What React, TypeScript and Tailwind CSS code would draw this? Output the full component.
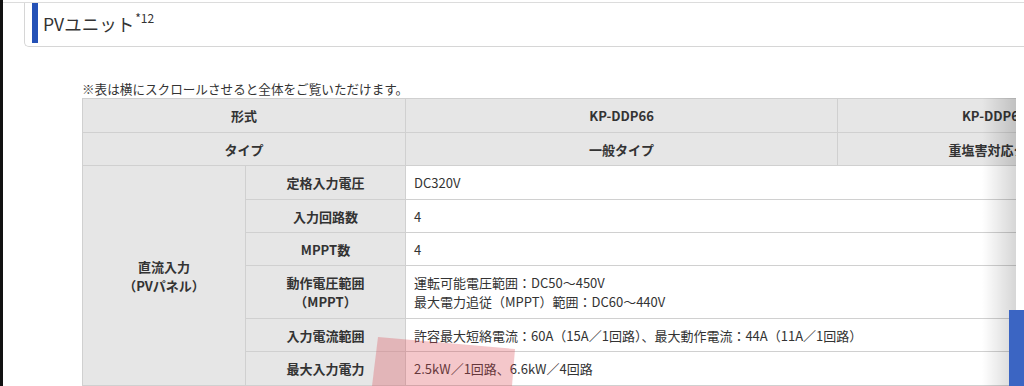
import React from "react";

const th = "bg-[#e6e6e6] border border-[#d0d0d0] font-bold text-center align-middle";
const td = "bg-white border border-[#d0d0d0] text-left align-middle pl-[8px]";

export default function App() {
  return (
    <div className="w-[1024px] h-[386px] overflow-hidden bg-white flex relative font-['Noto_Sans_CJK_JP','Noto_Sans',sans-serif] text-[#333]">
      {/* frame edge */}
      <div className="w-[3px] h-full bg-[#111] shrink-0" />
      <div className="flex-1 flex flex-col">
        <div className="h-[2px] border-b border-[#dcdcdc] mt-[1px]" />
        {/* section heading */}
        <div className="ml-[21px] h-[44px] border-l border-b border-[#d6d6d6] rounded-bl-[5px] flex items-start">
          <div className="ml-[7px] w-[6px] h-[40px] bg-[#2451b6]" />
          <div className="ml-[5px] mt-[10px] text-[17.5px] leading-[22px] flex items-start">
            <span>PVユニット</span>
            <span className="text-[12px] leading-[12px] mt-[-1px] ml-[1px]">*12</span>
          </div>
        </div>
        <div className="ml-[79px] mt-[34px] text-[12.6px] leading-[16px]">※表は横にスクロールさせると全体をご覧いただけます。</div>
        <div className="ml-[79px] mt-[1px] w-[934px] overflow-hidden relative">
          <table className="table-fixed border-collapse w-[1081px] text-[13px] leading-[19px]">
            <colgroup>
              <col className="w-[163px]" />
              <col className="w-[160px]" />
              <col className="w-[432px]" />
              <col className="w-[326px]" />
            </colgroup>
            <tbody>
              <tr className="h-[34px]">
                <th colSpan={2} className={th}>形式</th>
                <th className={th}>KP-DDP66</th>
                <th className={th}>KP-DDP66-S</th>
              </tr>
              <tr className="h-[33px]">
                <th colSpan={2} className={th}>タイプ</th>
                <th className={th}>一般タイプ</th>
                <th className={th}>重塩害対応タイプ</th>
              </tr>
              <tr className="h-[34px]">
                <th rowSpan={6} className={th}>
                  直流入力
                  <br />
                  （PVパネル）
                </th>
                <th className={th}>定格入力電圧</th>
                <td colSpan={2} className={td}>DC320V</td>
              </tr>
              <tr className="h-[33px]">
                <th className={th}>入力回路数</th>
                <td colSpan={2} className={td}>4</td>
              </tr>
              <tr className="h-[33px]">
                <th className={th}>MPPT数</th>
                <td colSpan={2} className={td}>4</td>
              </tr>
              <tr className="h-[53px]">
                <th className={th}>
                  動作電圧範囲
                  <br />
                  （MPPT）
                </th>
                <td colSpan={2} className={td}>
                  運転可能電圧範囲：DC50～450V
                  <br />
                  最大電力追従（MPPT）範囲：DC60～440V
                </td>
              </tr>
              <tr className="h-[33px]">
                <th className={th}>入力電流範囲</th>
                <td colSpan={2} className={td}>許容最大短絡電流：60A（15A／1回路）、最大動作電流：44A（11A／1回路）</td>
              </tr>
              <tr className="h-[34px]">
                <th className={th}>最大入力電力</th>
                <td colSpan={2} className={td}>2.5kW／1回路、6.6kW／4回路</td>
              </tr>
            </tbody>
          </table>
          {/* scroll hint shadow on the right edge */}
          <div className="absolute top-0 right-0 h-full w-[34px] bg-gradient-to-r from-transparent to-[rgba(0,0,0,0.16)] pointer-events-none" />
        </div>
      </div>
      {/* highlight marker */}
      <svg className="absolute left-0 top-0 pointer-events-none" width="1024" height="386">
        <polygon points="378,337 515,349 512,386 372,386" fill="rgb(220,70,80)" fillOpacity="0.3" />
      </svg>
      {/* floating button edge */}
      <div className="absolute left-[1009px] top-[310px] w-[15px] h-[76px] bg-[#3b65c3]" />
    </div>
  );
}
